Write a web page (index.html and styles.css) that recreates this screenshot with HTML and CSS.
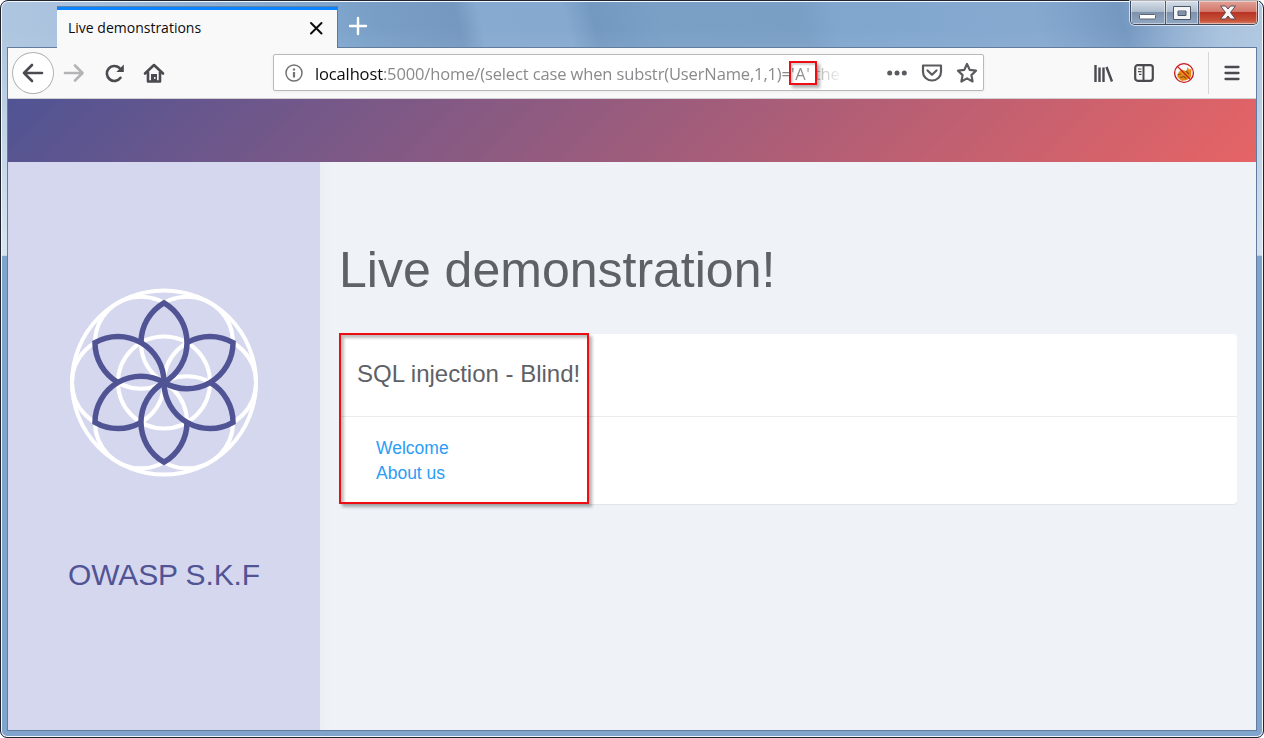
FILE: index.html
```html
<!DOCTYPE html>
<html lang="en">
<head>
<meta charset="utf-8">
<title>Live demonstrations</title>
<link rel="stylesheet" href="styles.css">
</head>
<body>
<div class="window">
  <div class="titlebar">
    <div class="tab">
      <span class="tab-title">Live demonstrations</span>
      <svg class="tab-close" width="14" height="14" viewBox="0 0 14 14"><path d="M2 2l10.500 10.500M12.500 2L2 12.500" stroke="#0c0c0d" stroke-width="2" stroke-linecap="round"/></svg>
    </div>
    <svg class="new-tab" width="20" height="20" viewBox="0 0 20 20"><path d="M10 2v16M2 10h16" stroke="#fff" stroke-width="2.400" stroke-linecap="round"/></svg>
    <div class="caption">
      <div class="cap"><svg width="18" height="6" viewBox="0 0 18 6"><rect x=".5" y=".5" width="16" height="4.500" rx="1" fill="#fff" stroke="#5c6577"/></svg></div>
      <div class="cap cap-max"><svg width="18" height="14" viewBox="0 0 18 14"><path d="M.5.5h17v13H.5zM5 5v4.500h8V5z" fill="#f4f4f6" fill-rule="evenodd" stroke="#4c5669"/></svg></div>
      <div class="cap cap-close"><svg width="18" height="15" viewBox="0 0 18 15"><path d="M1.500 1h5L9 4l2.500-3h5l-5 6.500 5 6.500h-5L9 11l-2.500 3h-5l5-6.500z" fill="#f6f4f4" stroke="#5c4a55"/></svg></div>
    </div>
  </div>
  <div class="client">
    <div class="toolbar">
      <div class="back"><svg width="22" height="20" viewBox="0 0 22 20"><path d="M20 10H2M10 2L2 10l8 8" class="ico"/></svg></div>
      <svg class="forward" width="22" height="20" viewBox="0 0 22 20"><path d="M2 10h17M12 2.500L19.500 10 12 17.500" class="ico ico-off"/></svg>
      <svg class="reload" width="22" height="20" viewBox="0 0 22 20"><path d="M16.500 14.800A7.500 7.500 0 1 1 15.500 5" class="ico"/><path d="M19.800 1.500v7.500h-7.500l2.500-2.500 2.500-2.500z" fill="#4a4a4f"/></svg>
      <svg class="home" width="22" height="20" viewBox="0 0 22 20"><path d="M2 10.500L11 2l9 8.500" class="ico"/><path d="M5 9.500V18.500h12V9.500" class="ico"/><path d="M8 18v-7h6v7z" fill="#4a4a4f"/><path d="M11.800 14v2" stroke="#fff" stroke-width="1.300"/></svg>
      <div class="urlbar">
        <svg class="info" width="18" height="18" viewBox="0 0 18 18"><circle cx="9" cy="9" r="8" fill="none" stroke="#737373" stroke-width="1.500"/><path d="M9 8v5.500M9 4.400v2" stroke="#737373" stroke-width="2.200"/></svg>
        <div class="url"><span class="host">localhost</span>:5000/home/(select case when substr(UserName,1,1)=<span class="probe">'A'</span> the</div>
        <svg class="dots" width="20" height="6" viewBox="0 0 20 6"><circle cx="2.700" cy="3" r="2.500"/><circle cx="10" cy="3" r="2.500"/><circle cx="17.300" cy="3" r="2.500"/></svg>
        <svg class="pocket" width="22" height="20" viewBox="0 0 22 20"><path d="M2 2.500h18v6.500a9 8.500 0 0 1-18 0zM6.500 7.500L11 11.800l4.500-4.300" class="ico"/></svg>
        <svg class="star" width="22" height="22" viewBox="0 0 22 22"><path d="M11 2l2.700 5.900 6.300.8-4.600 4.400 1.200 6.400-5.600-3.100-5.600 3.100 1.200-6.400L2 8.700l6.300-.8z" class="ico"/></svg>
        <div class="mark mark-char"></div>
      </div>
      <svg class="library" width="20" height="19" viewBox="0 0 20 19"><path d="M1.500 1v17M5.500 3.500V18M9.500 3.500V18M12.500 3l5.500 14.500" stroke="#4a4a4f" stroke-width="2.400"/></svg>
      <svg class="sidebar-icon" width="20" height="18" viewBox="0 0 20 18"><rect x="1.200" y="1.200" width="17.600" height="15.600" rx="2.500" fill="none" stroke="#4a4a4f" stroke-width="2.200"/><path d="M9.500 1v16" stroke="#4a4a4f" stroke-width="2"/><path d="M4 5h3.500M4 7.700h3.500M5 10.400h2.500" stroke="#4a4a4f" stroke-width="1.200"/></svg>
      <svg class="foxy" width="22" height="22" viewBox="0 0 22 22"><path d="M4.500 15c0-4 2-6 4-7.500l5 1.500 1-4 1.500 2.500 2.500-.5-.5 8-4 3-5.500 1z" fill="#e58a12"/><path d="M7 15.500l4-1 2 2M13 9l3 3M4.500 13l3-1" stroke="#80501b" stroke-width="1.100" fill="none"/><circle cx="11" cy="11" r="9.400" fill="none" stroke="#c8161d" stroke-width="1.300"/><path d="M4.400 4.400l13.200 13.200" stroke="#c8161d" stroke-width="1.300"/></svg>
      <div class="separator"></div>
      <svg class="menu" width="16" height="16" viewBox="0 0 16 16"><path d="M1.500 2h13M1.500 8h13M1.500 14h13" stroke="#4a4a4f" stroke-width="2.300" stroke-linecap="round"/></svg>
    </div>
    <div class="banner"></div>
    <div class="page">
      <aside class="side">
        <svg class="logo" width="192" height="192" viewBox="-96 -95.500 192 192">
          <defs>
            <g id="petal"><path d="M0 0A46 46 0 0 0 0-79.700A46 46 0 0 0-23-39.800"/></g>
          </defs>
          <g fill="none" stroke="#fff" stroke-width="4">
            <circle r="92"/><circle r="46"/>
            <circle cx="46" r="46"/><circle cx="23" cy="39.800" r="46"/><circle cx="-23" cy="39.800" r="46"/>
            <circle cx="-46" r="46"/><circle cx="-23" cy="-39.800" r="46"/><circle cx="23" cy="-39.800" r="46"/>
          </g>
          <g fill="none" stroke="#505494" stroke-width="5.500">
            <use href="#petal"/><use href="#petal" transform="rotate(60)"/><use href="#petal" transform="rotate(120)"/>
            <use href="#petal" transform="rotate(180)"/><use href="#petal" transform="rotate(240)"/><use href="#petal" transform="rotate(300)"/>
          </g>
        </svg>
        <div class="brand">OWASP S.K.F</div>
      </aside>
      <main class="main">
        <h1 class="headline">Live demonstration!</h1>
        <section class="card">
          <h2 class="card-title">SQL injection - Blind!</h2>
          <div class="card-body">
            <a class="link">Welcome</a>
            <a class="link">About us</a>
          </div>
          <div class="mark mark-card"></div>
        </section>
      </main>
    </div>
  </div>
</div>
</body>
</html>
```
FILE: styles.css
```css
* { box-sizing: border-box; }
html { background: #fff; }
body { margin: 0; font-family: "Liberation Sans", Arial, sans-serif; }
svg { display: block; flex: none; }

.window {
  width: 1264px; height: 738px; padding: 0 6px 6px;
  border: 1px solid #20242f; border-radius: 8px 8px 7px 7px;
  box-shadow: inset 0 0 0 1px #f3f8fd;
  background: linear-gradient(180deg, transparent 0 28px, rgba(215,228,240,.12) 60px, rgba(222,233,243,.85) 254px, transparent 255px),
    linear-gradient(76deg, #b3c9e1 0, #a8c1dd 140px, #8fb0d3 260px, #80a6cd 380px, #7ba1c8 405px, #799ec5 425px, #7598c0 500px, #87aad0 522px, #86a9cf 605px, #7499c1 632px, #7aa0c6 700px, #7a9fc5 835px, #80a6ce 865px, #86a9cf 1060px, #7fa2ca 1100px, #7598c1 1145px, #92b0d2 1190px, #aac3de 1240px, #b1c8e0 100%) 0 0 / 100% 255px no-repeat,
    #80a4cc;
}
.titlebar { height: 46px; display: flex; padding-left: 50px; align-items: flex-start; }
.tab {
  width: 281px; height: 42px; margin-top: 5px; display: flex; align-items: center; justify-content: space-between;
  padding: 0 14px 0 11px; background: #f9f9fa; border-top: 1px solid #5f83ab; border-right: 1px solid #61789a;
  box-shadow: inset 0 3px 0 #0a84ff; position: relative; z-index: 1;
}
.tab-title { font: 14px/20px "Open Sans", sans-serif; color: #0c0c0d; }
.tab-close { margin-top: 1px; }
.new-tab { margin: 15px 0 0 10px; }
.caption { display: flex; margin-left: auto; margin-right: -1px; height: 24px; border: 1px solid #3f4a5e; border-top: 0; border-radius: 0 0 5px 5px; box-shadow: 0 0 0 1px rgba(255,255,255,.65); overflow: hidden; }
.cap { width: 35px; display: flex; align-items: center; justify-content: center; padding-top: 8px; border-right: 1px solid #4c596f; background: linear-gradient(#d7dee8 0, #adbccd 46%, #7f91ab 50%, #91a8c3 100%); box-shadow: inset 0 0 0 1px rgba(255,255,255,.45); }
.cap-max { width: 33px; padding-top: 0; }
.cap-close { width: 58px; padding-top: 0; border: 0; background: linear-gradient(#e3a398 0, #d2766a 46%, #b93426 50%, #c65238 85%, #d6806a 100%); }

.client { width: 1250px; height: 684px; border: 1px solid #627c9d; display: flex; flex-direction: column; }
.toolbar { height: 51px; flex: none; background: #f9f9fa; border-bottom: 1px solid #d0d0d3; display: flex; align-items: center; padding: 0 16px 0 4px; }
.ico { fill: none; stroke: #4a4a4f; stroke-width: 2.6; stroke-linecap: round; stroke-linejoin: round; }
.ico-off { stroke: #b4b4b6; }
.back { width: 42px; height: 42px; border: 1px solid #b1b1b3; border-radius: 50%; background: #fff; display: flex; align-items: center; justify-content: center; }
.forward { margin-left: 9px; }
.reload { margin-left: 19px; }
.home { margin-left: 17px; }
.urlbar { position: relative; width: 712px; height: 37px; margin: 0 0 1px 108px; display: flex; align-items: center; background: #fff; border: 1px solid #b9b9bb; border-radius: 2px; box-shadow: 0 1px 3px rgba(0,0,0,.06); }
.info { margin-left: 11px; }
.url { margin-left: 12px; width: 527px; white-space: nowrap; font: 16.5px/30px "Open Sans", sans-serif; color: #8a8a8c; letter-spacing: -.13px; padding-top: 2px; -webkit-mask-image: linear-gradient(90deg, #000 485px, transparent 530px); mask-image: linear-gradient(90deg, #000 485px, transparent 530px); }
.host { color: #0c0c0d; }
.probe { letter-spacing: .7px; }
.dots { margin-left: 45px; fill: #5b5b5f; }
.pocket { margin-left: 14px; }
.star { margin-left: 13px; }
.pocket .ico, .star .ico { stroke: #5b5b5f; stroke-width: 2.2; }
.library { margin-left: 110px; }
.sidebar-icon { margin-left: 20px; }
.foxy { margin-left: 19px; }
.separator { width: 1px; height: 42px; margin-left: 13px; background: #d7d7db; }
.menu { margin-left: 15px; }

.banner { height: 63px; flex: none; background: linear-gradient(135deg, #505494 0, #e66465 100%); }
.page { flex: 1; display: flex; background: #eff3f7; }
.side { width: 312px; background: #d5d7ee; display: flex; flex-direction: column; align-items: center; padding-top: 125px; }
.brand { margin-top: 78px; font-size: 30px; line-height: 36px; letter-spacing: -.12px; color: #505494; }
.main { flex: 1; padding: 78px 19px 0; box-shadow: inset 12px 0 14px -12px rgba(80,90,110,.05); }
.headline { margin: 0; font-size: 50px; line-height: 60px; font-weight: 400; color: #5e6166; white-space: nowrap; }
.card { position: relative; height: 170px; margin-top: 34px; background: #fff; border-radius: 4px; box-shadow: 0 1px 1px rgba(0,0,0,.06); }
.card-title { margin: 0; height: 83px; padding: 25px 0 0 18px; border-bottom: 1px solid #e9ebee; font-size: 24px; line-height: 30px; font-weight: 400; color: #5e6166; }
.card-body { padding: 19px 0 0 37px; display: flex; flex-direction: column; align-items: flex-start; }
.link { font-size: 17.5px; line-height: 25px; color: #2c9cf6; }
.mark { position: absolute; border: 2px solid #ed0d12; }
.mark-card { left: 0; top: -1px; width: 250px; height: 171px; box-shadow: 3px 3px 3px rgba(0,0,0,.3), inset 3px 3px 3px rgba(0,0,0,.25); }
.mark-char { left: 515px; top: 6px; width: 28px; height: 24px; box-shadow: 3px 3px 3px rgba(0,0,0,.3), inset 2px 2px 2px rgba(0,0,0,.18); }
```
